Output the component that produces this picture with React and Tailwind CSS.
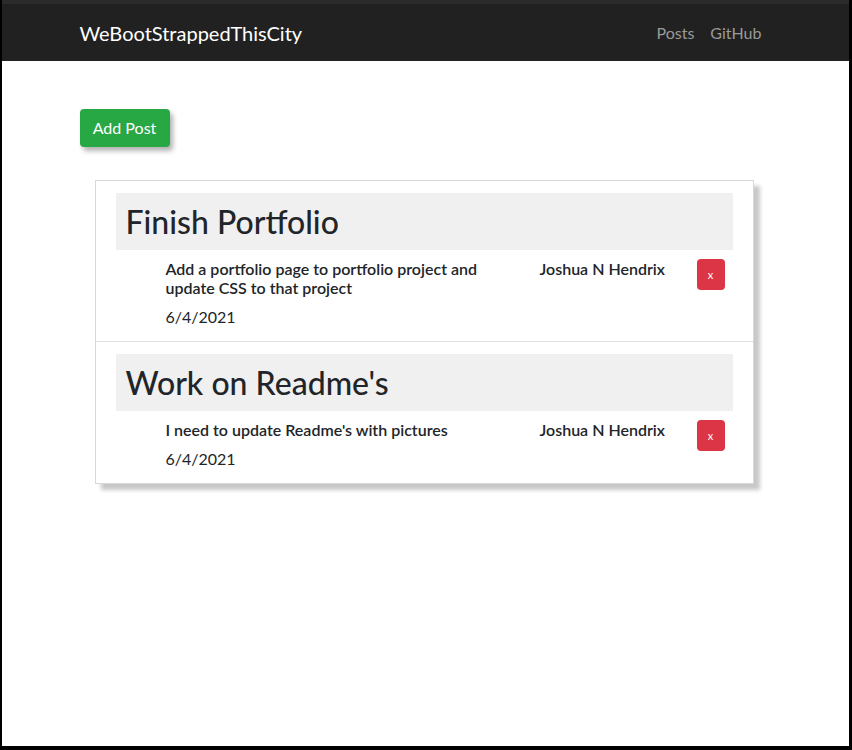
import { useState } from 'react';

const POSTS = [
  {
    id: 1,
    title: 'Finish Portfolio',
    body: 'Add a portfolio page to portfolio project and update CSS to that project',
    author: 'Joshua N Hendrix',
    date: '6/4/2021',
  },
  {
    id: 2,
    title: "Work on Readme's",
    body: "I need to update Readme's with pictures",
    author: 'Joshua N Hendrix',
    date: '6/4/2021',
  },
];

function PostItem({ post, last, onDelete }) {
  return (
    <li className={`px-5 pt-3 pb-3 ${last ? '' : 'border-b border-[#dfdfdf]'}`}>
      <div className="bg-[#f0f0f0] px-[10px] py-[9px]">
        <h2 className="text-[32px] leading-[39px] font-medium text-[#212529]">{post.title}</h2>
      </div>
      <div className="grid grid-cols-[374px_1fr_auto] pl-[50px] pr-2 mt-[9px]">
        <div>
          <h6 className="max-w-[345px] text-base leading-[19px] font-semibold text-[#212529] mb-2">{post.body}</h6>
          <p className="text-base leading-6 text-[#212529]">{post.date}</p>
        </div>
        <h6 className="text-base leading-[19px] font-semibold text-[#212529]">{post.author}</h6>
        <button
          onClick={() => onDelete(post.id)}
          className="w-7 h-[31px] bg-[#dc3545] text-white rounded text-[11px] leading-none flex items-center justify-center"
        >
          x
        </button>
      </div>
    </li>
  );
}

export default function App() {
  const [posts, setPosts] = useState(POSTS);

  return (
    <div className="h-[750px] bg-white border-l-2 border-r-[3px] border-b-4 border-black overflow-hidden font-['Lato',sans-serif] text-[#212529]">
      <nav className="bg-[#212121] border-t-4 border-[#2b2b2b] h-[61px]">
        <div className="w-[720px] mx-auto pl-[14px] pr-[16px] h-full flex items-center justify-between">
          <span className="text-white text-xl">WeBootStrappedThisCity</span>
          <div className="flex text-base text-[#9a9a9a]">
            <a href="#" className="px-2">Posts</a>
            <a href="#" className="px-2">GitHub</a>
          </div>
        </div>
      </nav>

      <main className="w-[720px] mx-auto pl-[14px] pr-[16px]">
        <button className="mt-12 bg-[#28a745] text-white text-base px-3 h-[38px] w-[90px] rounded shadow-[3px_4px_5px_rgba(0,0,0,0.3)]">
          Add Post
        </button>

        <ul className="mt-[33px] ml-[15px] w-[659px] bg-white border border-[#d8d8d8] shadow-[6px_6px_4px_#c8c8c8]">
          {posts.map((p, i) => (
            <PostItem
              key={p.id}
              post={p}
              last={i === posts.length - 1}
              onDelete={(id) => setPosts(ps => ps.filter(x => x.id !== id))}
            />
          ))}
        </ul>
      </main>
    </div>
  );
}
